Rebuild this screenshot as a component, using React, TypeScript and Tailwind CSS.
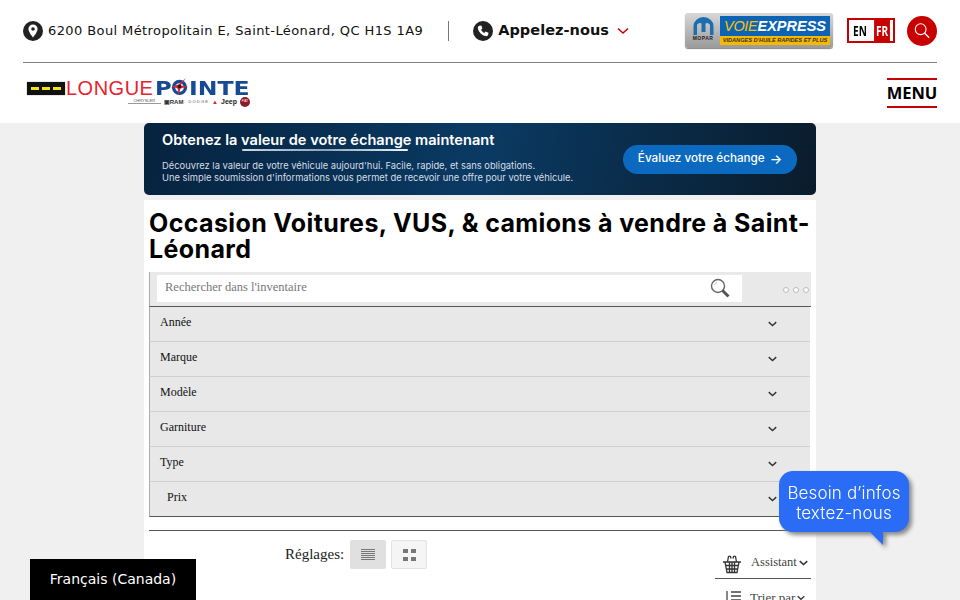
const filters = ['Année', 'Marque', 'Modèle', 'Garniture', 'Type', 'Prix'];

function Chevron({ className, width = 2 }: { className: string; width?: number }) {
  return (
    <svg viewBox="0 0 12 8" className={className} fill="none" stroke="currentColor" strokeWidth={width}>
      <path d="M1 1.5 L6 6 L11 1.5" />
    </svg>
  );
}

function Logo() {
  return (
    <div className="flex flex-col items-end w-[223px]">
      <div className="flex items-center h-[17px] w-full">
        <div className="w-[38px] h-[13px] bg-[#111] flex items-center justify-center gap-[3px] shadow-[0_0_1px_#777]">
          <span className="w-[8px] h-[3px] bg-[#f5e50a]" />
          <span className="w-[8px] h-[3px] bg-[#f5e50a]" />
          <span className="w-[8px] h-[3px] bg-[#f5e50a]" />
        </div>
        <span className="ml-[1px] w-[89px] font-['Liberation_Sans',sans-serif] text-[20px] leading-none text-[#e8222e] tracking-[0.5px] whitespace-nowrap">LONGUE</span>
        <div className="flex items-center font-['DejaVu_Sans',sans-serif] font-bold text-[#174a94] text-[19px] leading-none whitespace-nowrap">
          <span className="inline-block scale-x-[1.2] origin-left w-[15px]">P</span>
          <svg viewBox="0 0 20 20" className="w-[19px] h-[19px] -mt-[3px] shrink-0">
            <circle cx="10" cy="11" r="8" fill="#174a94" />
            <circle cx="10" cy="11" r="4.5" fill="#fff" />
            <path d="M17 1 L11 9 L19 10 L11 12 L9 19 L8 12 L2 10 L9 8 Z" fill="#e8222e" />
            <circle cx="10" cy="10" r="2" fill="#222" />
          </svg>
          <span className="inline-block scale-x-[1.24] origin-left">INTE</span>
        </div>
      </div>
      <div className="flex items-center gap-[3px] h-[10px] text-[4px] font-['Liberation_Sans',sans-serif] leading-none text-[#555] whitespace-nowrap">
        <span className="w-[33px] border-b border-[#999] text-center">CHRYSLER</span>
        <span className="font-bold text-[6px] text-[#333]">▣RAM</span>
        <span className="tracking-[1.2px] ml-[2px]">DODGE</span>
        <span className="text-[#d23] text-[6px]">▲</span>
        <span className="font-bold text-[7px] text-[#222]">Jeep</span>
        <span className="w-[10px] h-[10px] rounded-full bg-[#8d1c26] text-white text-[3px] flex items-center justify-center">FIAT</span>
      </div>
    </div>
  );
}

function VoieExpress() {
  return (
    <div className="flex w-[148px] h-[35px] rounded-[3px] bg-gradient-to-b from-[#d8d8d8] to-[#9a9a9a] p-[3px] gap-[2px] shadow-[0_1px_1px_#888]">
      <div className="w-[30px] flex flex-col items-center">
        <svg viewBox="0 0 24 20" className="w-[25px] h-[20px]">
          <path d="M2 19 V10 A10 9 0 0 1 22 10 V19 H18.5 V9 A3 3 0 0 0 14 7.5 V16 H10 V7.5 A3 3 0 0 0 5.5 9 V19 Z" fill="#1b6fb0" />
        </svg>
        <span className="font-['Liberation_Sans',sans-serif] font-bold text-[5px] leading-none tracking-[0.5px] text-[#222]">MOPAR</span>
      </div>
      <div className="flex-1 flex flex-col overflow-hidden">
        <div className="flex-1 bg-[#0d63b4] flex items-center justify-center font-['Liberation_Sans',sans-serif] italic font-bold text-[14.5px] leading-none whitespace-nowrap">
          <span className="text-[#f9c20a] font-normal tracking-[-0.3px]">VOIE</span>
          <span className="text-white">EXPRESS</span>
        </div>
        <div className="h-[9px] bg-[#f9b800] flex items-center justify-center font-['Liberation_Sans',sans-serif] italic font-bold text-[5.6px] leading-none text-[#333] whitespace-nowrap">
          VIDANGES D'HUILE RAPIDES ET PLUS
        </div>
      </div>
    </div>
  );
}

function Header() {
  return (
    <header className="bg-white h-[123px] px-[23px] shrink-0">
      <div className="h-[63px] border-b border-[#808080] flex items-center pb-[1px]">
        <svg viewBox="0 0 20 20" className="w-[20px] h-[20px]">
          <circle cx="10" cy="10" r="10" fill="#222" />
          <path fillRule="evenodd" d="M10 3.5 A4.6 4.6 0 0 0 5.4 8 C5.4 11 10 16.5 10 16.5 S14.6 11 14.6 8 A4.6 4.6 0 0 0 10 3.5 Z M10 6.2 A1.8 1.8 0 1 1 10 9.8 A1.8 1.8 0 0 1 10 6.2 Z" fill="#fff" />
        </svg>
        <span className="ml-[5px] font-['DejaVu_Sans',sans-serif] text-[13px] tracking-[0.4px] text-[#111] whitespace-nowrap">6200 Boul Métropolitain E, Saint-Léonard, QC H1S 1A9</span>
        <div className="ml-[25px] h-[20px] w-px bg-[#777]" />
        <svg viewBox="0 0 20 20" className="ml-[24px] w-[20px] h-[20px]">
          <circle cx="10" cy="10" r="10" fill="#222" />
          <path d="M6.5 4.8 L8.3 4.5 L9.4 7.5 L8.1 8.7 C8.7 10 9.9 11.3 11.3 11.9 L12.5 10.6 L15.5 11.7 L15.2 13.5 C15 14.7 13.8 15.4 12.6 15.1 C8.8 14.2 5.8 11.2 4.9 7.4 C4.6 6.2 5.3 5 6.5 4.8 Z" fill="#fff" />
        </svg>
        <span className="ml-[5px] font-['DejaVu_Sans',sans-serif] font-bold text-[14.5px] tracking-[0.05px] text-[#111] whitespace-nowrap">Appelez-nous</span>
        <Chevron className="ml-[8px] mt-[1px] w-[12px] h-[8px] text-[#c80000]" width={1.6} />
        <div className="ml-auto flex items-center">
          <VoieExpress />
          <div className="ml-[14px] flex w-[48px] h-[25px] border-[2px] border-[#c80000] font-['Noto_Sans',sans-serif] font-bold text-[14px] leading-none">
            <span className="w-[22px] bg-white text-black flex items-center justify-center scale-x-[0.72]">EN</span>
            <span className="flex-1 bg-[#c80000] text-white flex items-center justify-center scale-x-[0.72]">FR</span>
          </div>
          <div className="ml-[12px] w-[30px] h-[30px] rounded-full bg-[#c80000] flex items-center justify-center">
            <svg viewBox="0 0 20 20" className="w-[18px] h-[18px]" fill="none" stroke="#fff" strokeWidth="1.2">
              <circle cx="8.5" cy="8" r="6" />
              <path d="M13 12.5 L18 17.5" strokeWidth="1.6" />
            </svg>
          </div>
        </div>
      </div>
      <div className="h-[60px] flex items-center justify-between pl-[4px]">
        <Logo />
        <div className="w-[50px] h-[30px] border-y-2 border-[#c80000] flex items-center justify-center font-['Noto_Sans',sans-serif] font-bold text-[16.5px] leading-none text-black">MENU</div>
      </div>
    </header>
  );
}

function Banner() {
  return (
    <div className="h-[72px] rounded-[5px] bg-[linear-gradient(100deg,#06233f_0%,#0a3a63_50%,#0a1c2c_100%)] flex items-center justify-between pl-[18px] pr-[19px] font-['Inter',sans-serif] text-white">
      <div>
        <div className="relative text-[14.6px] font-semibold leading-[18px] whitespace-nowrap -mt-[3px]">
          Obtenez la valeur de votre échange maintenant
          <span className="absolute left-[80px] top-[18px] w-[166px] h-[2px] rounded-full bg-gradient-to-r from-[#cfd8e0] via-[#8fa6b8] to-[#eef2f5]" />
        </div>
        <p className="mt-[11px] text-[9.35px] leading-[12px] text-[#d7dee5] whitespace-nowrap">
          Découvrez la valeur de votre véhicule aujourd'hui. Facile, rapide, et sans obligations.
          <br />
          Une simple soumission d'informations vous permet de recevoir une offre pour votre véhicule.
        </p>
      </div>
      <div className="w-[174px] h-[29px] rounded-full bg-[#0b6abf] flex items-center justify-center gap-[5px] text-[11.7px] font-medium whitespace-nowrap">
        Évaluez votre échange
        <span className="text-[13px] leading-none">→</span>
      </div>
    </div>
  );
}

function Filters() {
  return (
    <div className="w-[662px] font-['Liberation_Serif',serif]">
      <div className="h-[35px] bg-[#e9e9e9] border-b border-[#555] flex items-start pl-[7px] pt-[3px] border-l border-l-[#aaa]">
        <div className="w-[585px] h-[27px] bg-white flex items-center justify-between pl-[8px] pr-[12px]">
          <span className="text-[12.5px] text-[#777] -mt-[2px]">Rechercher dans l'inventaire</span>
          <svg viewBox="0 0 20 20" className="w-[20px] h-[20px] -mt-[1px]" fill="none">
            <circle cx="8" cy="8" r="6.5" stroke="#666" strokeWidth="1.4" />
            <path d="M4.5 7 A4 4 0 0 1 7 4.5" stroke="#bbb" strokeWidth="1" />
            <path d="M12.5 12.5 L18.5 18.5" stroke="#555" strokeWidth="3" />
          </svg>
        </div>
        <div className="ml-auto mt-[12px] mr-[2px] flex gap-[4px]">
          <span className="w-[6px] h-[6px] rounded-full border border-[#bbb] bg-white" />
          <span className="w-[6px] h-[6px] rounded-full border border-[#bbb] bg-white" />
          <span className="w-[6px] h-[6px] rounded-full border border-[#bbb] bg-white" />
        </div>
      </div>
      {filters.map((f, i) => (
        <div key={f} className={`h-[35px] w-[661px] bg-[#e8e8e8] flex items-center justify-between pr-[33px] border-l border-l-[#aaa] border-b ${i === 5 ? 'border-[#555] pl-[17px]' : 'border-[#cfcfcf] pl-[10px]'}`}>
          <span className="text-[12px] text-[#111] -mt-[5px]">{f}</span>
          <Chevron className="w-[9px] h-[6px] text-[#333] -mt-[1px]" width={1.8} />
        </div>
      ))}
    </div>
  );
}

function Toolbar() {
  return (
    <div className="mt-[13px] w-[662px] border-t border-[#555] flex justify-between font-['Liberation_Serif',serif]">
      <div className="flex items-center h-[29px] mt-[9px] ml-[136px]">
        <span className="text-[15px] text-[#222]">Réglages:</span>
        <div className="ml-[6px] w-[36px] h-[29px] rounded-[2px] bg-[#e0e0e0] flex flex-col items-center justify-center gap-[1px]">
          {[0, 1, 2, 3, 4, 5].map(n => (
            <span key={n} className="w-[14px] h-px bg-[#777]" />
          ))}
        </div>
        <div className="ml-[5px] w-[36px] h-[29px] rounded-[2px] bg-[#f5f5f5] border border-[#e2e2e2] grid grid-cols-[5px_5px] grid-rows-[4px_4px] gap-x-[3px] gap-y-[4px] justify-center content-center">
          <span className="bg-[#777]" />
          <span className="bg-[#777]" />
          <span className="bg-[#777]" />
          <span className="bg-[#777]" />
        </div>
      </div>
      <div className="w-[96px] mt-[17px]">
        <div className="h-[31px] border-b border-[#555] flex items-center pl-[7px] text-[12.5px] text-[#444]">
          <svg viewBox="0 0 20 20" className="w-[20px] h-[21px]" fill="none" stroke="#333" strokeWidth="1.3">
            <path d="M1 8.5 H19 M3 8.5 L5 19 H15 L17 8.5 M5.5 8.5 L6.5 3 A2 2 0 0 1 8.5 3 L9 5 M14.5 8.5 L13.5 3 A2 2 0 0 0 11.5 3 L11 5 M3.6 12 H16.4 M4.3 15.5 H15.7 M7.5 8.5 V19 M10 8.5 V19 M12.5 8.5 V19" />
          </svg>
          <span className="ml-[9px] -mt-[1px]">Assistant</span>
          <Chevron className="ml-[2px] w-[9px] h-[6px] text-[#333]" width={2} />
        </div>
        <div className="flex items-center pl-[11px] pt-[9px] text-[13px] text-[#444]">
          <svg viewBox="0 0 16 16" className="w-[16px] h-[16px] shrink-0" fill="none" stroke="#444" strokeWidth="1.3">
            <path d="M1 1 V15 M5 2 H15 M5 6 H15 M5 10 H15 M5 14 H15" />
          </svg>
          <span className="ml-[8px] whitespace-nowrap">Trier par</span>
          <Chevron className="ml-[2px] w-[8px] h-[6px] text-[#333]" width={2} />
        </div>
      </div>
    </div>
  );
}

export default function App() {
  return (
    <div className="relative h-screen overflow-hidden bg-[#f0f0f0] flex flex-col">
      <Header />
      <div className="w-[672px] mx-auto">
        <Banner />
        <main className="mt-[5px] bg-white pl-[5px] pt-[10px] h-[500px]">
          <h1 className="font-['Inter',sans-serif] font-bold text-[25px] tracking-[0.37px] leading-[26px] text-black w-[664px]">
            Occasion Voitures, VUS, &amp; camions à vendre à Saint-Léonard
          </h1>
          <div className="mt-[10px]">
            <Filters />
            <Toolbar />
          </div>
        </main>
      </div>

      <div className="absolute left-[30px] bottom-0 w-[166px] h-[41px] bg-black text-white flex items-center justify-center font-['DejaVu_Sans',sans-serif] text-[14px]">
        Français (Canada)
      </div>

      <div className="absolute left-[779px] top-[471px] w-[130px] h-[61px] rounded-[14px] bg-[#2a6cf6] drop-shadow-[3px_3px_2px_#888] flex items-center justify-center text-center font-['Inter',sans-serif] font-light text-white text-[17px] tracking-[0.15px] leading-[20px]">
        <span className="mt-[2px]">Besoin d’infos<br />textez-nous</span>
        <span className="absolute left-[90px] top-[60px] w-0 h-0 border-l-[14px] border-l-transparent border-t-[14px] border-t-[#2a6cf6]" />
      </div>
    </div>
  );
}
